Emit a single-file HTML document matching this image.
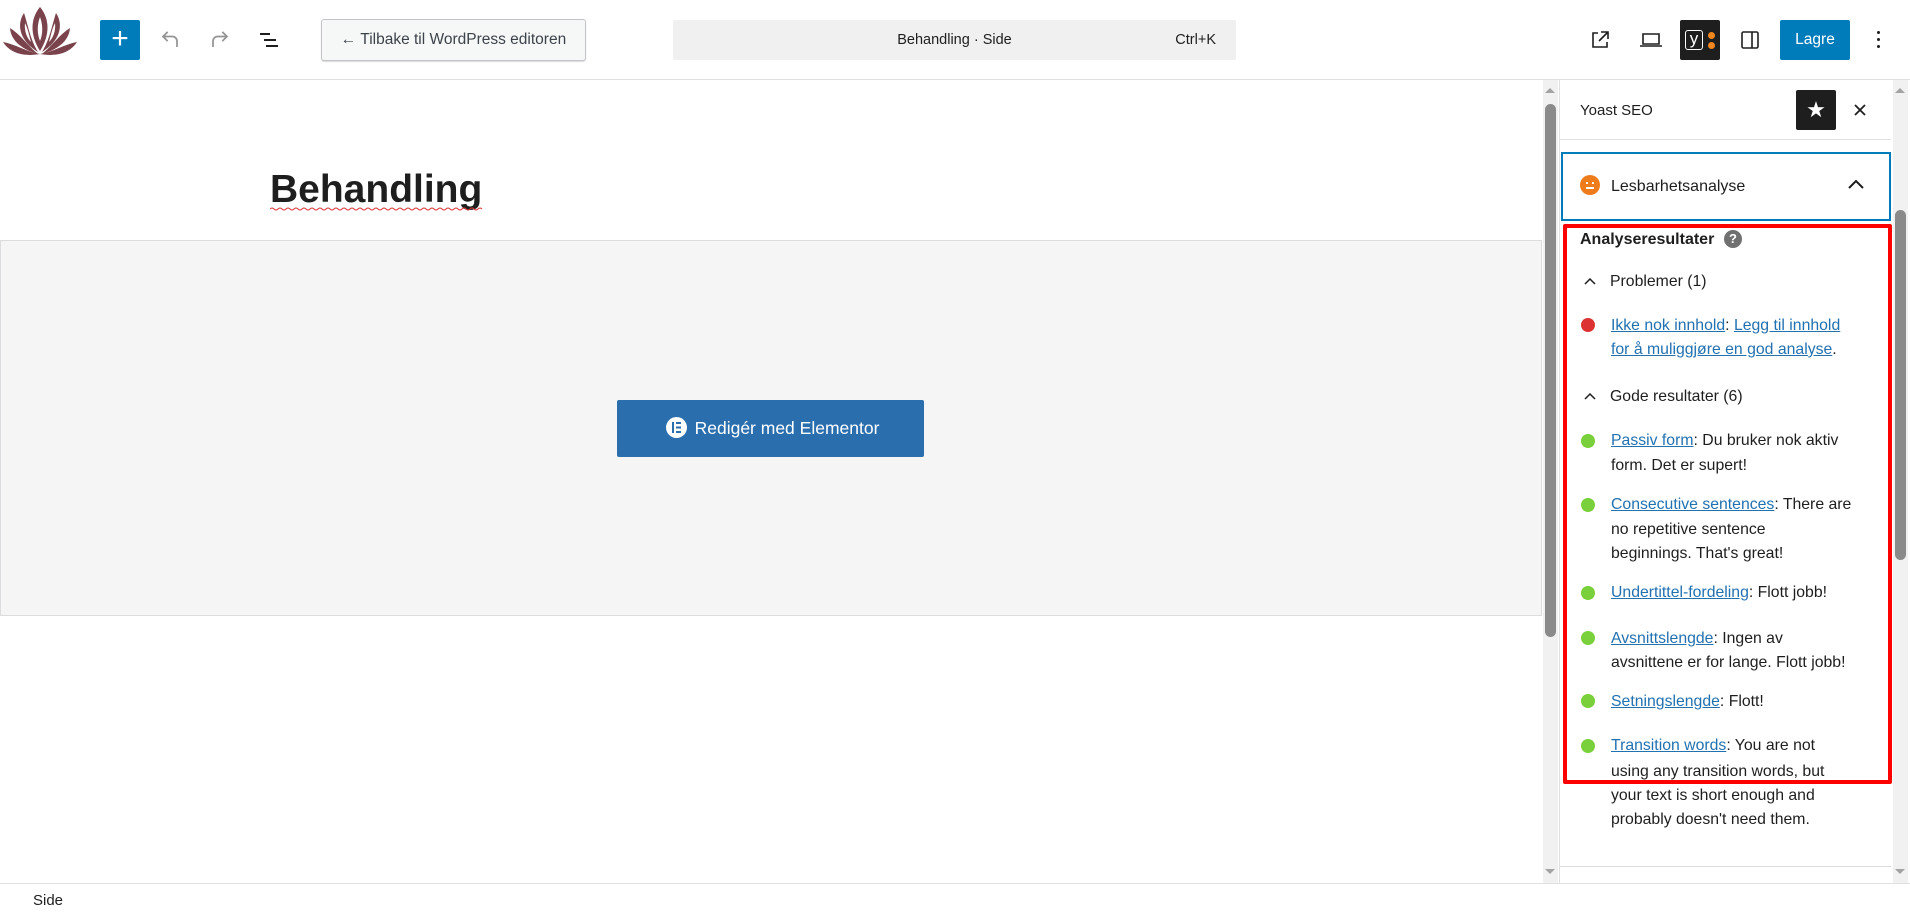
<!DOCTYPE html>
<html><head><meta charset="utf-8"><style>
*{margin:0;padding:0;box-sizing:border-box}
body{width:1910px;height:915px;overflow:hidden;background:#fff;font-family:"Liberation Sans",sans-serif;color:#1e1e1e;position:relative}
.a{position:absolute;white-space:nowrap}
.t{font-size:15.8px;line-height:20px;transform:translateY(-10px)}
a{color:#2271b1;text-decoration:underline}
.dot{position:absolute;width:14px;height:14px;border-radius:50%;left:1581px}
.g{background:#7ad03a}
</style></head><body>
<!-- header -->
<div class="a" style="left:0;top:79px;width:1910px;height:1px;background:#e0e0e0"></div>
<svg class="a" style="left:3px;top:7px" width="74" height="50" viewBox="0 0 74 50"><g fill="#7a434b">
<path d="M37 0 C27 12 27 28 37 44 C47 28 47 12 37 0Z M37 10 C34 18 34 27 37 34 C40 27 40 18 37 10Z" fill-rule="evenodd"/>
<path d="M21 6 C13 18 17 34 35 45 C27 32 25 18 21 6Z M22 16 C21 24 24 31 28 35 C26 28 25 22 22 16Z" fill-rule="evenodd"/>
<path d="M53 6 C61 18 57 34 39 45 C47 32 49 18 53 6Z M52 16 C53 24 50 31 46 35 C48 28 49 22 52 16Z" fill-rule="evenodd"/>
<path d="M7 21 C8 35 21 43 35 47 C24 38 18 28 7 21Z"/>
<path d="M67 21 C66 35 53 43 39 47 C50 38 56 28 67 21Z"/>
<path d="M0 35 C9 49 26 49 37 47 C24 45 12 37 0 35Z"/>
<path d="M74 35 C65 49 48 49 37 47 C50 45 62 37 74 35Z"/>
</g></svg>
<div class="a" style="left:100px;top:20px;width:40px;height:40px;background:#007cba;border-radius:2px;color:#fff;font-size:30px;line-height:38px;text-align:center">+</div>
<svg class="a" style="left:156px;top:26px" width="28" height="28" viewBox="0 0 24 24"><path d="M18 18v-5a4 4 0 0 0-4-4H6M10 5L6 9l4 4" fill="none" stroke="#949494" stroke-width="1.5"/></svg>
<svg class="a" style="left:206px;top:26px" width="28" height="28" viewBox="0 0 24 24"><path d="M6 18v-5a4 4 0 0 1 4-4h8M14 5l4 4-4 4" fill="none" stroke="#949494" stroke-width="1.5"/></svg>
<svg class="a" style="left:257px;top:28px" width="26" height="24" viewBox="0 0 26 24"><path d="M3 6h10M7 12h12M9 18h12" stroke="#1e1e1e" stroke-width="2"/></svg>
<div class="a" style="left:321px;top:19px;width:265px;height:42px;border:1px solid #c3c4c7;border-radius:3px;background:#f6f7f7;box-shadow:0 1px 1px rgba(0,0,0,.15);font-size:15.5px;line-height:40px;text-align:center;color:#3c434a">← Tilbake til WordPress editoren</div>
<div class="a" style="left:673px;top:20px;width:563px;height:40px;background:#f0f0f0;border-radius:2px;font-size:14.5px;line-height:40px"><span class="a" style="left:0;width:100%;text-align:center">Behandling · Side</span><span class="a" style="right:20px">Ctrl+K</span></div>
<svg class="a" style="left:1588px;top:28px" width="24" height="24" viewBox="0 0 24 24"><path d="M19 14v5H5V5h5M13 4h7v7M20 4l-9 9" fill="none" stroke="#1e1e1e" stroke-width="1.6"/></svg>
<svg class="a" style="left:1638px;top:28px" width="26" height="24" viewBox="0 0 26 24"><path d="M5 6h16v10H5zM2 18h22" fill="none" stroke="#1e1e1e" stroke-width="1.6"/></svg>
<div class="a" style="left:1680px;top:20px;width:40px;height:40px;background:#1e1e1e;border-radius:2px"><div class="a" style="left:5px;top:10px;width:18px;height:20px;border:1.5px solid #fff;border-radius:3px;color:#fff;font-size:17px;line-height:15px;text-align:center">y</div><div class="a" style="left:28px;top:12px;width:7px;height:7px;border-radius:50%;background:#f0861e"></div><div class="a" style="left:28px;top:22px;width:7px;height:7px;border-radius:50%;background:#f0861e"></div></div>
<svg class="a" style="left:1738px;top:28px" width="24" height="24" viewBox="0 0 24 24"><rect x="4" y="4" width="16" height="16" rx="1.5" fill="none" stroke="#1e1e1e" stroke-width="1.6"/><path d="M14 4v16" stroke="#1e1e1e" stroke-width="1.6"/></svg>
<div class="a" style="left:1780px;top:20px;width:70px;height:40px;background:#007cba;border-radius:2px;color:#fff;font-size:15.5px;line-height:40px;text-align:center">Lagre</div>
<div class="a" style="left:1877px;top:31px;width:3px;height:3px;background:#1e1e1e;border-radius:50%;box-shadow:0 7px 0 #1e1e1e,0 14px 0 #1e1e1e"></div>
<!-- editor -->
<div class="a" style="left:270px;top:166px;font-size:39px;font-weight:bold;line-height:48px">Behandling</div>
<svg class="a" style="left:270px;top:207px" width="215" height="5"><path d="M0 2 q2 -2 4 0 t4 0 t4 0 t4 0 t4 0 t4 0 t4 0 t4 0 t4 0 t4 0 t4 0 t4 0 t4 0 t4 0 t4 0 t4 0 t4 0 t4 0 t4 0 t4 0 t4 0 t4 0 t4 0 t4 0 t4 0 t4 0 t4 0 t4 0 t4 0 t4 0 t4 0 t4 0 t4 0 t4 0 t4 0 t4 0 t4 0 t4 0 t4 0 t4 0 t4 0 t4 0 t4 0 t4 0 t4 0 t4 0 t4 0 t4 0 t4 0 t4 0 t4 0 t4 0 t4 0" fill="none" stroke="#d63638" stroke-width="1"/></svg>
<div class="a" style="left:0;top:240px;width:1542px;height:376px;background:#f5f5f5;border:1px solid #dcdcde"></div>
<div class="a" style="left:617px;top:400px;width:307px;height:57px;background:#2a6eae;border-radius:2px;color:#fff;font-size:17.5px;line-height:57px;text-align:center;padding-left:4px"><span style="display:inline-block;width:21px;height:21px;border-radius:50%;background:#fff;vertical-align:-4px;margin-right:8px;position:relative"><span style="position:absolute;left:6px;top:5px;width:2px;height:11px;background:#2a6eae"></span><span style="position:absolute;left:10px;top:5px;width:5px;height:2px;background:#2a6eae;box-shadow:0 4.5px 0 #2a6eae,0 9px 0 #2a6eae"></span></span>Redigér med Elementor</div>
<!-- editor scrollbar -->
<div class="a" style="left:1543px;top:80px;width:15px;height:803px;background:#f1f1f1"></div>
<div class="a" style="left:1545px;top:104px;width:11px;height:533px;background:#8a8a8a;border-radius:6px"></div>
<div class="a" style="left:1545px;top:88px;width:0;height:0;border:5px solid transparent;border-bottom-color:#a3a3a3;border-top:0"></div>
<div class="a" style="left:1545px;top:869px;width:0;height:0;border:5px solid transparent;border-top-color:#a3a3a3;border-bottom:0"></div>
<!-- sidebar -->
<div class="a" style="left:1559px;top:80px;width:1px;height:804px;background:#e0e0e0"></div>
<div class="a" style="left:1580px;top:101px;font-size:15px;line-height:20px">Yoast SEO</div>
<div class="a" style="left:1796px;top:90px;width:40px;height:40px;background:#1e1e1e;border-radius:2px;color:#fff;font-size:22px;line-height:40px;text-align:center">★</div>
<svg class="a" style="left:1851px;top:101px" width="18" height="18" viewBox="0 0 18 18"><path d="M4 4l10 10M14 4L4 14" stroke="#1e1e1e" stroke-width="1.8"/></svg>
<div class="a" style="left:1560px;top:139px;width:331px;height:1px;background:#e0e0e0"></div>
<div class="a" style="left:1561px;top:152px;width:330px;height:69px;border:2px solid #007cba"></div>
<div class="a" style="left:1580px;top:175px;width:20px;height:20px;border-radius:50%;background:#ee7c1b"><div class="a" style="left:6px;top:7px;width:2px;height:2px;background:#fff;box-shadow:6px 0 0 #fff"></div><div class="a" style="left:6px;top:12px;width:8px;height:1.5px;background:#fff"></div></div>
<div class="a" style="left:1611px;top:177px;font-size:16px;line-height:20px">Lesbarhetsanalyse</div>
<svg class="a" style="left:1847px;top:177px" width="18" height="14" viewBox="0 0 18 14"><path d="M2 11l7-7 7 7" fill="none" stroke="#1e1e1e" stroke-width="2"/></svg>
<div class="a" style="left:1563px;top:224px;width:329px;height:560px;border:4px solid #f00;border-radius:2px"></div>
<div class="a t" style="left:1580px;top:240px;font-weight:bold;font-size:16px">Analyseresultater</div>
<div class="a" style="left:1724px;top:230px;width:18px;height:18px;border-radius:50%;background:#707070;color:#fff;font-size:13px;font-weight:bold;line-height:18px;text-align:center">?</div>
<svg class="a" style="left:1583px;top:276px" width="14" height="10" viewBox="0 0 14 10"><path d="M2 8l5-5 5 5" fill="none" stroke="#1e1e1e" stroke-width="1.5"/></svg>
<div class="a t" style="left:1610px;top:282px">Problemer (1)</div>
<div class="dot" style="top:318px;background:#dc3232"></div>
<div class="a t" style="left:1611px;top:326px"><a>Ikke nok innhold</a>: <a>Legg til innhold</a></div>
<div class="a t" style="left:1611px;top:350px"><a>for å muliggjøre en god analyse</a>.</div>
<svg class="a" style="left:1583px;top:391px" width="14" height="10" viewBox="0 0 14 10"><path d="M2 8l5-5 5 5" fill="none" stroke="#1e1e1e" stroke-width="1.5"/></svg>
<div class="a t" style="left:1610px;top:397px">Gode resultater (6)</div>
<div class="dot g" style="top:434px"></div>
<div class="a t" style="left:1611px;top:441px"><a>Passiv form</a>: Du bruker nok aktiv</div>
<div class="a t" style="left:1611px;top:466px">form. Det er supert!</div>
<div class="dot g" style="top:498px"></div>
<div class="a t" style="left:1611px;top:505px"><a>Consecutive sentences</a>: There are</div>
<div class="a t" style="left:1611px;top:530px">no repetitive sentence</div>
<div class="a t" style="left:1611px;top:554px">beginnings. That's great!</div>
<div class="dot g" style="top:586px"></div>
<div class="a t" style="left:1611px;top:593px"><a>Undertittel-fordeling</a>: Flott jobb!</div>
<div class="dot g" style="top:631px"></div>
<div class="a t" style="left:1611px;top:639px"><a>Avsnittslengde</a>: Ingen av</div>
<div class="a t" style="left:1611px;top:663px">avsnittene er for lange. Flott jobb!</div>
<div class="dot g" style="top:694px"></div>
<div class="a t" style="left:1611px;top:702px"><a>Setningslengde</a>: Flott!</div>
<div class="dot g" style="top:739px"></div>
<div class="a t" style="left:1611px;top:746px"><a>Transition words</a>: You are not</div>
<div class="a t" style="left:1611px;top:772px">using any transition words, but</div>
<div class="a t" style="left:1611px;top:796px">your text is short enough and</div>
<div class="a t" style="left:1611px;top:820px">probably doesn't need them.</div>
<div class="a" style="left:1560px;top:866px;width:331px;height:1px;background:#ddd"></div>
<!-- sidebar scrollbar -->
<div class="a" style="left:1893px;top:80px;width:15px;height:803px;background:#f1f1f1"></div>
<div class="a" style="left:1895px;top:210px;width:11px;height:350px;background:#8a8a8a;border-radius:6px"></div>
<div class="a" style="left:1895px;top:88px;width:0;height:0;border:5px solid transparent;border-bottom-color:#a3a3a3;border-top:0"></div>
<div class="a" style="left:1895px;top:869px;width:0;height:0;border:5px solid transparent;border-top-color:#a3a3a3;border-bottom:0"></div>
<!-- footer -->
<div class="a" style="left:0;top:883px;width:1910px;height:1px;background:#e0e0e0"></div>
<div class="a" style="left:33px;top:892px;font-size:15px;line-height:18px">Side</div>
</body></html>
